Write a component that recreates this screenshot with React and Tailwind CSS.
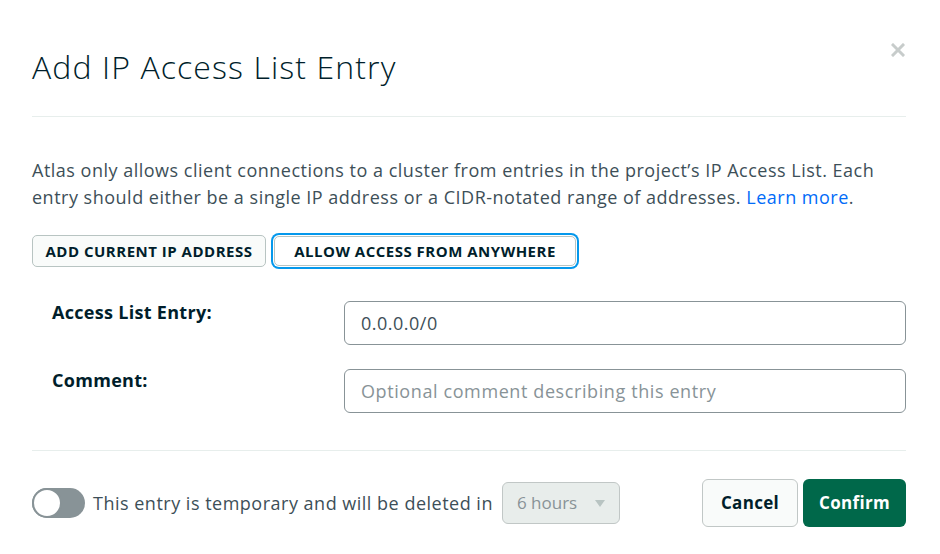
import React from "react";

const font = { fontFamily: "'Open Sans', Lato, sans-serif" };

const CloseIcon = () => (
  <svg width="14" height="14" viewBox="0 0 14 14" aria-hidden="true">
    <path d="M2 2 L12 12 M12 2 L2 12" stroke="#c7cccb" strokeWidth="3" strokeLinecap="square" />
  </svg>
);

const Caret = () => (
  <svg width="10" height="7" viewBox="0 0 10 7" aria-hidden="true">
    <path d="M0 0 H10 L5 7 Z" fill="#b8c4c2" />
  </svg>
);

const FormRow = ({ label, children }) => (
  <div className="flex items-start">
    <div className="w-[312px] shrink-0 pl-5 pt-0 text-[18px] font-bold leading-[22px] tracking-[0.3px] text-[#001e2b]">
      {label}
    </div>
    <div className="flex-1">{children}</div>
  </div>
);

export default function App() {
  return (
    <div className="relative min-h-[554px] w-[940px] bg-white pl-8 pr-[34px] text-[#21313c]" style={font}>
      {/* header */}
      <div className="flex items-center border-b border-[#e7eeec] pt-[46px] pb-[28px]">
        <h1 className="text-[32px] font-light leading-[42px] tracking-[1.1px] text-[#001e2b]">Add IP Access List Entry</h1>
      </div>
      <button className="absolute right-[35px] top-[43px]" aria-label="Close">
        <CloseIcon />
      </button>

      {/* description */}
      <p className="mt-[40px] text-[18px] leading-[27px] tracking-[0.5px] text-[#3d4f58]">
        Atlas only allows client connections to a cluster from entries in the project’s IP Access List. Each
        <br />
        entry should either be a single IP address or a CIDR-notated range of addresses.{" "}
        <span className="text-[#016bf8]">Learn more</span>.
      </p>

      <div className="mt-[24px] flex items-center gap-[8px]">
        <button className="h-[32px] w-[234px] rounded-[5px] border border-[#b8c4c2] bg-[#f9fbfa] text-[15px] font-bold uppercase tracking-[0.5px] text-[#001e2b]">
          Add current IP address
        </button>
        <button className="h-[30px] w-[302px] rounded-[5px] border border-[#b8c4c2] bg-white text-[15px] font-bold uppercase tracking-[0.5px] text-[#001e2b] ring-2 ring-[#0498ec] ring-offset-1">
          Allow access from anywhere
        </button>
      </div>

      {/* form */}
      <div className="mt-[34px] flex flex-col gap-6">
        <FormRow label="Access List Entry:">
          <div className="flex h-[44px] items-center rounded-[6px] border border-[#889397] px-4 text-[18px] tracking-[0.5px] text-[#3d4f58]">
            0.0.0.0/0
          </div>
        </FormRow>
        <FormRow label="Comment:">
          <div className="flex h-[44px] items-center rounded-[6px] border border-[#889397] px-4 text-[18px] tracking-[0.6px] text-[#889397]">
            Optional comment describing this entry
          </div>
        </FormRow>
      </div>

      {/* footer */}
      <div className="mt-[37px] flex items-center border-t border-[#e7eeec] pt-[28px]">
        <div className="flex h-[30px] w-[53px] items-center rounded-full bg-[#889397]">
          <div className="h-[30px] w-[30px] rounded-full border-2 border-[#889397] bg-white" />
        </div>
        <span className="ml-2 text-[18px] tracking-[0.5px] text-[#3d4f58]">This entry is temporary and will be deleted in</span>
        <div className="ml-[9px] flex h-[42px] w-[118px] items-center justify-between rounded-[6px] border border-[#c1c7c6] bg-[#e8edeb] pl-[14px] pr-[14px] text-[17px] text-[#889397]">
          <span>6 hours</span>
          <Caret />
        </div>
        <div className="ml-auto flex gap-[5px]">
          <button className="h-[48px] w-[96px] rounded-[6px] border border-[#c1c7c6] bg-[#f9fbfa] text-[17px] font-bold tracking-[0.3px] text-[#001e2b]">
            Cancel
          </button>
          <button className="h-[48px] w-[103px] rounded-[6px] bg-[#00684a] text-[17px] font-bold tracking-[0.3px] text-white">
            Confirm
          </button>
        </div>
      </div>
    </div>
  );
}
